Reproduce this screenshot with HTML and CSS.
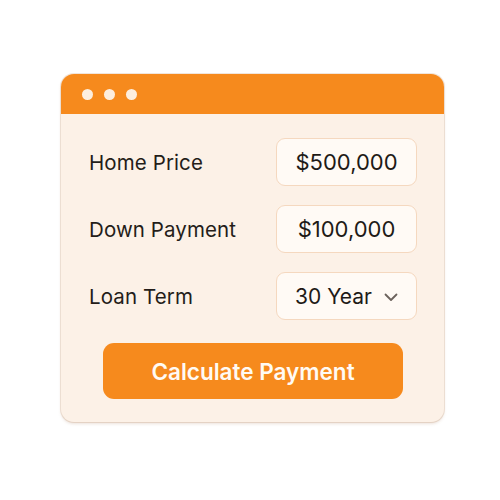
FILE: index.html
```html
<!DOCTYPE html>
<html lang="en">
<head>
<meta charset="utf-8">
<title>Mortgage Calculator</title>
<link rel="stylesheet" href="styles.css">
</head>
<body>
  <div class="stage">
    <div class="window">
      <div class="titlebar">
        <span class="dot"></span><span class="dot"></span><span class="dot"></span>
      </div>
      <div class="body">
        <div class="row">
          <span class="label">Home Price</span>
          <div class="field">$500,000</div>
        </div>
        <div class="row">
          <span class="label">Down Payment</span>
          <div class="field">$100,000</div>
        </div>
        <div class="row">
          <span class="label">Loan Term</span>
          <div class="field select">
            <span>30 Year</span>
            <svg class="chev" width="14" height="9" viewBox="0 0 14 9"><path d="M1.5 1.5 L7 7 L12.5 1.5" fill="none" stroke="#6b625c" stroke-width="1.8" stroke-linecap="round" stroke-linejoin="round"/></svg>
          </div>
        </div>
        <button class="calc">Calculate Payment</button>
      </div>
    </div>
  </div>
</body>
</html>
```
FILE: styles.css
```css
html, body {
  margin: 0;
  padding: 0;
  background: #ffffff;
}

body {
  font-family: Inter, "Noto Sans", sans-serif;
  color: #241d19;
}

.stage {
  width: 500px;
  height: 500px;
  padding-top: 74px;
  padding-left: 61px;
  box-sizing: border-box;
}

.window {
  width: 383px;
  border-radius: 13px;
  background: #fcf1e7;
  overflow: hidden;
  box-shadow: 0 2px 3px rgba(180, 140, 110, 0.25), 0 0 0 1px rgba(230, 205, 185, 0.5);
}

.titlebar {
  height: 40px;
  background: #f68a1d;
  display: flex;
  align-items: center;
  gap: 11px;
  padding-left: 21px;
}

.dot {
  width: 11px;
  height: 11px;
  border-radius: 50%;
  background: #fdeede;
}

.body {
  padding: 24px 27px 23px 28px;
  display: flex;
  flex-direction: column;
  gap: 19px;
}

.row {
  display: flex;
  align-items: center;
  justify-content: space-between;
}

.label {
  font-size: 20.5px;
  letter-spacing: 0.1px;
}

.field {
  width: 141px;
  height: 48px;
  box-sizing: border-box;
  border: 1.5px solid #f5d8bf;
  border-radius: 9px;
  background: #fffaf5;
  display: flex;
  align-items: center;
  justify-content: center;
  font-size: 22px;
  color: #1e1a17;
}

.select {
  justify-content: flex-start;
  padding-left: 18px;
  gap: 12px;
}

.select span {
  font-size: 21px;
}

.chev {
  margin-top: 2px;
}

.calc {
  margin-top: 4px;
  align-self: center;
  width: 300px;
  height: 56px;
  border: none;
  border-radius: 11px;
  background: #f68a1d;
  color: #fffaf4;
  font-family: Inter, "Noto Sans", sans-serif;
  font-size: 22.5px;
  font-weight: 600;
}
```
